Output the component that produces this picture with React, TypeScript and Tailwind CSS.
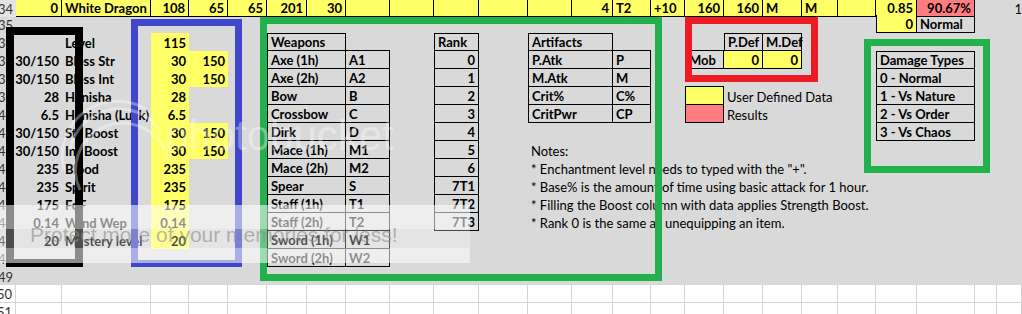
import React from "react";

type Cell = [number, number, string, string?];

const GRID =
  "grid grid-cols-[16px_46px_89px_38px_39px_39px_40px_39px_44px_44px_45px_49px_44px_41px_38px_34px_39px_39px_39px_36px_38px_41px_58px_22px_25px]";

const SPAN: Record<number, string> = {
  1: "",
  2: "col-span-2",
  3: "col-span-3",
};

const Y = "bg-[#ffff66]";
const PK = "bg-[#ff7c80]";
const R = "justify-end";
const HDR = "justify-end font-normal text-[#333333] pr-[3px] overflow-hidden";
const B34 = "border-r border-b border-black";

function fill(cells: Cell[], filler: string) {
  const out: { s: number; t: string; k: string }[] = [];
  let col = 0;
  const sorted = [...cells].sort((a, b) => a[0] - b[0]);
  for (const [c, s, t, k] of sorted) {
    while (col < c) {
      out.push({ s: 1, t: "", k: filler });
      col++;
    }
    out.push({ s, t, k: k ?? "" });
    col += s;
  }
  while (col < 25) {
    out.push({ s: 1, t: "", k: filler });
    col++;
  }
  return out;
}

function Row({
  cells,
  h = "h-[18px]",
  bg = "",
  filler = "",
}: {
  cells: Cell[];
  h?: string;
  bg?: string;
  filler?: string;
}) {
  const list = fill(cells, filler);
  return (
    <div className={`${GRID} ${h} ${bg}`}>
      {list.map((c, i) => (
        <div
          key={i}
          className={`flex items-end whitespace-nowrap leading-[16px] px-[3px] ${SPAN[c.s]} ${c.k}`}
        >
          {c.t}
        </div>
      ))}
    </div>
  );
}

const TL = "border-l border-r border-b border-black";
const TR = "border-r border-b border-black";
const TH = "border border-black";
const TH2 = "border-t border-r border-b border-black";

const NOTE = "font-normal";

export default function App() {
  return (
    <div className="relative h-[314px] w-[1022px] overflow-hidden bg-[#d9d9d9] font-['Lato'] text-[13px] font-bold text-black">
      {/* Row 34 */}
      <Row
        h="h-[15px]"
        cells={[
          [0, 1, "34", HDR + " bg-[#e3e3e3]"],
          [1, 1, "0", `${Y} ${B34} ${R}`],
          [2, 1, "White Dragon", `${Y} ${B34}`],
          [3, 1, "108", `${Y} ${B34} ${R}`],
          [4, 1, "65", `${Y} ${B34} ${R}`],
          [5, 1, "65", `${Y} ${B34} ${R}`],
          [6, 1, "201", `${Y} ${B34} ${R}`],
          [7, 1, "30", `${Y} ${B34} ${R}`],
          [8, 1, "", `${Y} ${B34}`],
          [9, 1, "", `${Y} ${B34}`],
          [10, 1, "", `${Y} ${B34}`],
          [11, 1, "", `${Y} ${B34}`],
          [12, 1, "", `${Y} ${B34}`],
          [13, 1, "4", `${Y} ${B34} ${R}`],
          [14, 1, "T2", `${Y} ${B34}`],
          [15, 1, "+10", `${Y} ${B34}`],
          [16, 1, "160", `${Y} ${B34} ${R}`],
          [17, 1, "160", `${Y} ${B34} ${R}`],
          [18, 1, "M", `${Y} ${B34}`],
          [19, 1, "M", `${Y} ${B34}`],
          [20, 1, "", `${Y} ${B34}`],
          [21, 1, "0.85", `${Y} ${B34} ${R}`],
          [22, 1, "90.67%", `${PK} ${B34} ${R}`],
          [24, 1, "1", "font-normal justify-end pr-0"],
        ]}
      />
      {/* Row 35 */}
      <Row
        cells={[
          [0, 1, "35", HDR],
          [21, 1, "0", `${Y} ${TL} ${R}`],
          [22, 1, "Normal", TR],
        ]}
      />
      {/* Row 36 */}
      <Row
        cells={[
          [0, 1, "36", HDR],
          [2, 1, "Level"],
          [3, 1, "115", `${Y} ${R}`],
          [6, 2, "Weapons", TH],
          [8, 1, "", "border-b border-black"],
          [10, 1, "Rank", TH],
          [12, 2, "Artifacts", TH],
          [14, 1, "", "border-b border-black"],
          [16, 1, "", "border-b border-black"],
          [17, 1, "P.Def", TH],
          [18, 1, "M.Def", TH2],
        ]}
      />
      {/* Row 37 */}
      <Row
        cells={[
          [0, 1, "37", HDR],
          [1, 1, "30/150", R],
          [2, 1, "Bless Str"],
          [3, 1, "30", `${Y} ${R}`],
          [4, 1, "150", `${Y} ${R}`],
          [6, 2, "Axe (1h)", TL],
          [8, 1, "A1", TR],
          [10, 1, "0", `${TL} ${R}`],
          [12, 2, "P.Atk", TL],
          [14, 1, "P", TR],
          [16, 1, "Mob", TL],
          [17, 1, "0", `${Y} ${TR} ${R}`],
          [18, 1, "0", `${Y} ${TR} ${R}`],
          [21, 2, "Damage Types", TH],
        ]}
      />
      {/* Row 38 */}
      <Row
        cells={[
          [0, 1, "38", HDR],
          [1, 1, "30/150", R],
          [2, 1, "Bless Int"],
          [3, 1, "30", `${Y} ${R}`],
          [4, 1, "150", `${Y} ${R}`],
          [6, 2, "Axe (2h)", TL],
          [8, 1, "A2", TR],
          [10, 1, "1", `${TL} ${R}`],
          [12, 2, "M.Atk", TL],
          [14, 1, "M", TR],
          [16, 1, "", "border-b border-black"],
          [21, 2, "0 - Normal", TL],
        ]}
      />
      {/* Row 39 */}
      <Row
        cells={[
          [0, 1, "39", HDR],
          [1, 1, "28", R],
          [2, 1, "Hanisha"],
          [3, 1, "28", `${Y} ${R}`],
          [6, 2, "Bow", TL],
          [8, 1, "B", TR],
          [10, 1, "2", `${TL} ${R}`],
          [12, 2, "Crit%", TL],
          [14, 1, "C%", TR],
          [16, 1, "", `${Y} ${TL}`],
          [17, 1, "User Defined Data", NOTE],
          [21, 2, "1 - Vs Nature", TL],
        ]}
      />
      {/* Row 40 */}
      <Row
        cells={[
          [0, 1, "40", HDR],
          [1, 1, "6.5", R],
          [2, 1, "Hanisha (Luck)"],
          [3, 1, "6.5", `${Y} ${R}`],
          [6, 2, "Crossbow", TL],
          [8, 1, "C", TR],
          [10, 1, "3", `${TL} ${R}`],
          [12, 2, "CritPwr", TL],
          [14, 1, "CP", TR],
          [16, 1, "", `${PK} ${TL}`],
          [17, 1, "Results", NOTE],
          [21, 2, "2 - Vs Order", TL],
        ]}
      />
      {/* Row 41 */}
      <Row
        cells={[
          [0, 1, "41", HDR],
          [1, 1, "30/150", R],
          [2, 1, "Str Boost"],
          [3, 1, "30", `${Y} ${R}`],
          [4, 1, "150", `${Y} ${R}`],
          [6, 2, "Dirk", TL],
          [8, 1, "D", TR],
          [10, 1, "4", `${TL} ${R}`],
          [21, 2, "3 - Vs Chaos", TL],
        ]}
      />
      {/* Row 42 */}
      <Row
        cells={[
          [0, 1, "42", HDR],
          [1, 1, "30/150", R],
          [2, 1, "Int Boost"],
          [3, 1, "30", `${Y} ${R}`],
          [4, 1, "150", `${Y} ${R}`],
          [6, 2, "Mace (1h)", TL],
          [8, 1, "M1", TR],
          [10, 1, "5", `${TL} ${R}`],
          [12, 1, "Notes:", NOTE],
        ]}
      />
      {/* Row 43 */}
      <Row
        cells={[
          [0, 1, "43", HDR],
          [1, 1, "235", R],
          [2, 1, "Blood"],
          [3, 1, "235", `${Y} ${R}`],
          [6, 2, "Mace (2h)", TL],
          [8, 1, "M2", TR],
          [10, 1, "6", `${TL} ${R}`],
          [12, 1, '* Enchantment level needs to typed with the "+".', NOTE],
        ]}
      />
      {/* Row 44 */}
      <Row
        cells={[
          [0, 1, "44", HDR],
          [1, 1, "235", R],
          [2, 1, "Spirit"],
          [3, 1, "235", `${Y} ${R}`],
          [6, 2, "Spear", TL],
          [8, 1, "S", TR],
          [10, 1, "7T1", `${TL} ${R}`],
          [12, 1, "* Base% is the amount of time using basic attack for 1 hour.", NOTE],
        ]}
      />
      {/* Row 45 */}
      <Row
        cells={[
          [0, 1, "45", HDR],
          [1, 1, "175", R],
          [2, 1, "FoF"],
          [3, 1, "175", `${Y} ${R}`],
          [6, 2, "Staff (1h)", TL],
          [8, 1, "T1", TR],
          [10, 1, "7T2", `${TL} ${R}`],
          [12, 1, "* Filling the Boost column with data applies Strength Boost.", NOTE],
        ]}
      />
      {/* Row 46 */}
      <Row
        cells={[
          [0, 1, "46", HDR],
          [1, 1, "0.14", R],
          [2, 1, "Wind Wep"],
          [3, 1, "0.14", `${Y} ${R}`],
          [6, 2, "Staff (2h)", TL],
          [8, 1, "T2", TR],
          [10, 1, "7T3", `${TL} ${R}`],
          [12, 1, "* Rank 0 is the same as unequipping an item.", NOTE],
        ]}
      />
      {/* Row 47 */}
      <Row
        cells={[
          [0, 1, "47", HDR],
          [1, 1, "20", R],
          [2, 1, "Mastery level"],
          [3, 1, "20", `${Y} ${R}`],
          [6, 2, "Sword (1h)", TL],
          [8, 1, "W1", TR],
        ]}
      />
      {/* Row 48 */}
      <Row
        cells={[
          [0, 1, "48", HDR],
          [6, 2, "Sword (2h)", TL],
          [8, 1, "W2", TR],
        ]}
      />
      {/* Row 49 */}
      <Row cells={[[0, 1, "49", HDR]]} />
      {/* Rows 50-51 */}
      <Row
        bg="bg-white"
        filler="border-r border-b border-[#d4d4d4]"
        cells={[[0, 1, "50", HDR + " border-r border-b border-[#d4d4d4]"]]}
      />
      <Row
        bg="bg-white"
        filler="border-r border-b border-[#d4d4d4]"
        cells={[[0, 1, "51", HDR + " border-r border-b border-[#d4d4d4]"]]}
      />

      {/* Hand-drawn highlight boxes */}
      <div className="pointer-events-none absolute left-[6px] top-[27px] h-[240px] w-[77px] border-[8px] border-black" />
      <div className="pointer-events-none absolute left-[131px] top-[19px] h-[248px] w-[111px] border-[7px] border-[#3f48cc]" />
      <div className="pointer-events-none absolute left-[260px] top-[17px] h-[264px] w-[402px] border-[7px] border-[#22b14c]" />
      <div className="pointer-events-none absolute left-[685px] top-[17px] h-[65px] w-[133px] border-[7px] border-[#ed1c24]" />
      <div className="pointer-events-none absolute left-[864px] top-[39px] h-[134px] w-[126px] border-[7px] border-[#22b14c]" />

      {/* Photobucket watermark */}
      <svg
        className="pointer-events-none absolute left-[50px] top-[90px]"
        width="130"
        height="130"
        viewBox="0 0 130 130"
        fill="none"
        stroke="white"
        strokeOpacity="0.35"
        strokeWidth="3"
      >
        <path d="M20 60 A50 50 0 0 1 110 40" />
        <path d="M14 80 A55 55 0 0 1 100 22" />
        <path d="M30 100 A45 45 0 0 1 115 60" />
      </svg>
      <div className="pointer-events-none absolute left-[165px] top-[112px] font-['Liberation_Sans'] text-[42px] font-normal leading-[48px] text-white/35">
        photobucket
      </div>
      <div className="pointer-events-none absolute left-0 top-[205px] h-[24px] w-[470px] bg-white/55" />
      <div className="pointer-events-none absolute left-0 top-[229px] h-[19px] w-[470px] bg-white/30" />
      <div className="pointer-events-none absolute left-0 top-[248px] h-[15px] w-[470px] bg-white/55" />
      <div className="pointer-events-none absolute left-[30px] top-[223px] font-['Liberation_Sans'] text-[21px] font-normal leading-[24px] text-[#8a8a8a]/60">
        Protect more of your memories for less!
      </div>
    </div>
  );
}
